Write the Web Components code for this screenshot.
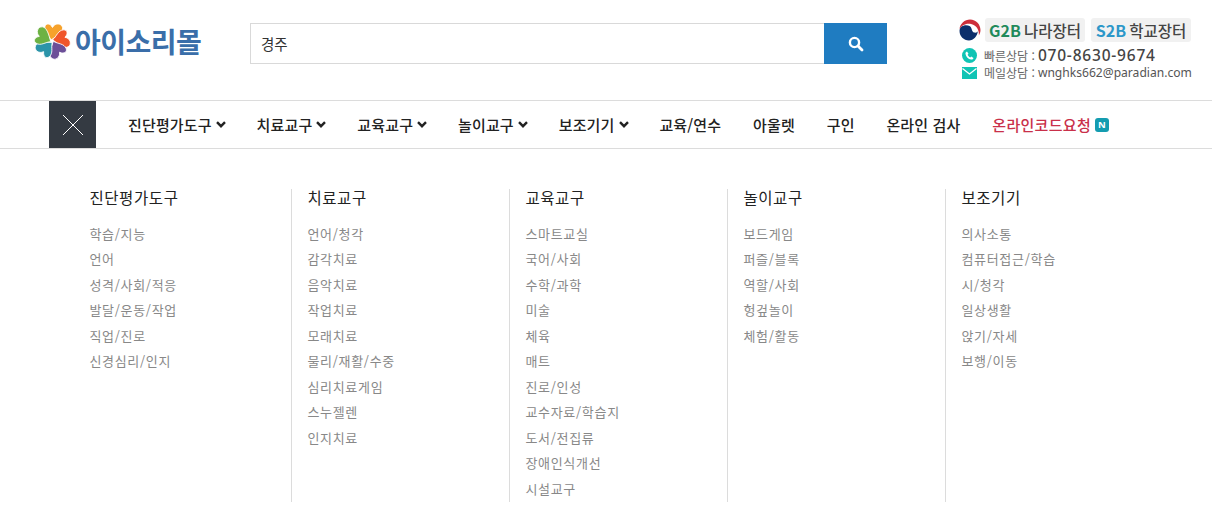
<!DOCTYPE html>
<html lang="ko">
<head>
<meta charset="utf-8">
<title>아이소리몰</title>
<style>
html, body { margin: 0; padding: 0; background: #fff; }
body { font-family: "Noto Sans CJK KR", "Noto Sans", sans-serif; }
</style>
</head>
<body>
<shop-header></shop-header>
<shop-nav>
    <nav-link arrow>진단평가도구</nav-link>
    <nav-link arrow>치료교구</nav-link>
    <nav-link arrow>교육교구</nav-link>
    <nav-link arrow>놀이교구</nav-link>
    <nav-link arrow>보조기기</nav-link>
    <nav-link>교육/연수</nav-link>
    <nav-link>아울렛</nav-link>
    <nav-link>구인</nav-link>
    <nav-link>온라인 검사</nav-link>
    <nav-link hot>온라인코드요청</nav-link>
</shop-nav>
<menu-panel>
    <menu-column heading="진단평가도구" items="학습/지능,언어,성격/사회/적응,발달/운동/작업,직업/진로,신경심리/인지"></menu-column>
    <menu-column heading="치료교구" items="언어/청각,감각치료,음악치료,작업치료,모래치료,물리/재활/수중,심리치료게임,스누젤렌,인지치료"></menu-column>
    <menu-column heading="교육교구" items="스마트교실,국어/사회,수학/과학,미술,체육,매트,진로/인성,교수자료/학습지,도서/전집류,장애인식개선,시설교구"></menu-column>
    <menu-column heading="놀이교구" items="보드게임,퍼즐/블록,역할/사회,헝겊놀이,체험/활동"></menu-column>
    <menu-column heading="보조기기" items="의사소통,컴퓨터접근/학습,시/청각,일상생활,앉기/자세,보행/이동"></menu-column>
</menu-panel>

<script>
(function(){

    // Top row: logo, search box, contact block
    const headerTpl = document.createElement('template');
    headerTpl.innerHTML = `
    <style>
    :host { display: flex; align-items: flex-start; height: 100px; box-sizing: border-box; color: #333; }
    .logo { display: flex; align-items: center; width: 250px; padding: 22px 0 0 33px; box-sizing: border-box; height: 60px; }
    .logo svg { width: 38px; height: 38px; flex: none; }
    .logo span { margin-left: 4px; font-size: 28px; font-weight: 700; color: #3a6ea9; letter-spacing: -0.5px; line-height: 38px; }
    form { display: flex; width: 637px; height: 41px; margin: 23px 0 0; }
    .box { flex: 1; border: 1px solid #d9d9d9; border-right: 0; font-size: 14.500px; line-height: 39px; padding-left: 10px; color: #333; }
    button { width: 63px; border: 0; background: #1f7cc1; padding: 0; display: flex; align-items: center; justify-content: center; }
    .contact { margin: 18px 0 0 72px; width: 240px; }
    .row { display: flex; align-items: center; height: 24px; }
    .badge { display: inline-flex; align-items: center; height: 24px; width: 100px; justify-content: center; margin-left: 6px; background: #f1f1f1; border-radius: 3px; font-size: 15.500px; font-weight: 500; color: #444; white-space: nowrap; }
    .badge:first-of-type { margin-left: 4px; }
    .badge b { font-weight: 700; margin-right: 3px; font-size: 16px; }
    .g2b { color: #1f8a5b; }
    .s2b { color: #2c97c9; }
    .line { display: flex; align-items: center; height: 17px; line-height: 17px; font-size: 12px; color: #666; padding-left: 3px; white-space: nowrap; }
    .line svg { flex: none; margin-right: 7px; }
    .tel { font-size: 15.500px; font-weight: 500; letter-spacing: 0.8px; color: #444; margin-left: 3px; font-family: "Noto Sans", sans-serif; }
    .mail { margin-left: 3px; font-size: 12.100px; font-family: "Noto Sans", sans-serif; color: #555; }
    </style>
    <div class="logo">
        <svg viewBox="-19 -19 38 38" aria-hidden="true">
            <defs><path id="p" d="M-1 -1C-3 -6 -8.500 -9 -7 -14.500C-6 -18 -2 -18 0.500 -13.500C3 -18.500 9.500 -18 10.500 -13.500C11.500 -9 5 -5 -1 -1Z" stroke="#fff" stroke-width="0.800"/></defs>
            <use href="#p" fill="#f6a22c"/>
            <use href="#p" fill="#f0562b" transform="rotate(72)"/>
            <use href="#p" fill="#6c4f98" transform="rotate(144)"/>
            <use href="#p" fill="#2b94a9" transform="rotate(216)"/>
            <use href="#p" fill="#6db244" transform="rotate(288)"/>
        </svg>
        <span>아이소리몰</span>
    </div>
    <form onsubmit="return false">
        <div class="box">경주</div>
        <button type="button" aria-label="검색">
            <svg width="16" height="16" viewBox="0 0 16 16"><circle cx="6.500" cy="6.500" r="4.600" fill="none" stroke="#fff" stroke-width="2.400"/><path d="M10 10l4 4" stroke="#fff" stroke-width="2.800" stroke-linecap="round"/></svg>
        </button>
    </form>
    <div class="contact">
        <div class="row">
            <svg width="22" height="22" viewBox="-10.500 -10.500 21 21" aria-hidden="true">
                <path d="M-10 -1C-9.500 -6 -5 -10 0 -10C6 -10 10 -5 10 0C10 2 9.500 3.500 8.500 5C9 -1 5 -5.500 0 -6C-5 -6.500 -8 -4 -10 -1Z" fill="#cd2e3a"/>
                <path d="M-10 1C-10 -4 -4 -6 0 -3.500C2 -2 1.500 2 4 2.500C6 3 7 2 7.500 1C7 6 3.500 10 -1 10C-6 10 -10 6 -10 1Z" fill="#0d2f6b"/>
            </svg>
            <span class="badge"><b class="g2b">G2B</b>나라장터</span>
            <span class="badge"><b class="s2b">S2B</b>학교장터</span>
        </div>
        <div style="height:5px"></div>
        <div class="line">
            <svg width="15" height="15" viewBox="0 0 15 15" aria-hidden="true"><circle cx="7.500" cy="7.500" r="7.500" fill="#10c4b4"/><path d="M5 3.500l1.500 2.300-.9 1c.5 1.200 1.400 2.100 2.600 2.600l1-.9 2.300 1.500c-.4 1.200-1.300 1.700-2.400 1.500C6.300 11 4 8.700 3.500 5.900 3.300 4.800 3.900 3.900 5 3.500z" fill="#fff"/></svg>
            <span>빠른상담 :</span><span class="tel">070-8630-9674</span>
        </div>
        <div class="line">
            <svg width="15" height="12" viewBox="0 0 15 12" aria-hidden="true"><rect width="15" height="12" fill="#10c4b4"/><path d="M0.500 1.500L7.500 7L14.500 1.500" fill="none" stroke="#fff" stroke-width="1.300"/></svg>
            <span>메일상담 :</span><span class="mail">wnghks662@paradian.com</span>
        </div>
    </div>`;

    customElements.define('shop-header',
    class extends HTMLElement {
        constructor() {
            super();
            this.attachShadow({ mode: 'open' }).append(headerTpl.content.cloneNode(true));
        }
    });

    // Category bar with the dark close button
    const navTpl = document.createElement('template');
    navTpl.innerHTML = `
    <style>
    :host { display: flex; height: 49px; box-sizing: border-box; border-top: 1px solid #dcdcdc; border-bottom: 1px solid #dcdcdc; padding-left: 49px; }
    .close { width: 47px; background: #343a42; display: flex; align-items: center; justify-content: center; flex: none; }
    .items { display: flex; align-items: center; margin-left: 32px; }
    </style>
    <div class="close">
        <svg width="22" height="22" viewBox="0 0 22 22"><path d="M1 1L21 21M21 1L1 21" stroke="#fff" stroke-width="1"/></svg>
    </div>
    <div class="items"><slot></slot></div>`;

    customElements.define('shop-nav',
    class extends HTMLElement {
        constructor() {
            super();
            this.attachShadow({ mode: 'open' }).append(navTpl.content.cloneNode(true));
        }
    });

    const linkTpl = document.createElement('template');
    linkTpl.innerHTML = `
    <style>
    :host { display: inline-flex; align-items: center; font-size: 15px; font-weight: 500; letter-spacing: 0.150px; color: #222; white-space: nowrap; margin-right: 31.800px; line-height: 47px; }
    :host([hot]) { color: #c9304a; margin-right: 0; letter-spacing: 0.300px; }
    svg { margin-left: 4px; display: none; }
    :host([arrow]) { margin-right: 30.900px; }
    :host([arrow]) svg.arrow { display: block; }
    :host([hot]) .new { display: inline-flex; }
    .new { display: none; width: 14px; height: 14px; margin: 1px 0 0 4px; border-radius: 3px; background: #149cb0; color: #fff; font-size: 9.500px; font-weight: 700; line-height: 14px; align-items: center; justify-content: center; font-family: "Noto Sans", sans-serif; }
    </style>
    <slot></slot>
    <svg class="arrow" width="10" height="7" viewBox="0 0 10 7"><path d="M1 1.200L5 5.200L9 1.200" fill="none" stroke="#222" stroke-width="2.400"/></svg>
    <span class="new">N</span>`;

    customElements.define('nav-link',
    class extends HTMLElement {
        constructor() {
            super();
            this.attachShadow({ mode: 'open' }).append(linkTpl.content.cloneNode(true));
        }
    });

    // Five-column dropdown below the bar
    const panelTpl = document.createElement('template');
    panelTpl.innerHTML = `
    <style>
    :host { display: grid; grid-template-columns: repeat(5, 218px); padding: 40px 0 0 73px; }
    </style>
    <slot></slot>`;

    customElements.define('menu-panel',
    class extends HTMLElement {
        constructor() {
            super();
            this.attachShadow({ mode: 'open' }).append(panelTpl.content.cloneNode(true));
        }
    });

    const colTpl = document.createElement('template');
    colTpl.innerHTML = `
    <style>
    :host { display: block; height: 313px; box-sizing: border-box; padding-left: 15.400px; border-left: 1px solid #dcdcdc; }
    :host(:first-child) { border-left-color: transparent; }
    h3 { margin: 0 0 14.500px; font-size: 15.500px; font-weight: 400; letter-spacing: 0.600px; line-height: 17px; color: #222; }
    ul { list-style: none; margin: 0; padding: 0; }
    li { font-size: 13px; letter-spacing: 0.700px; line-height: 25.500px; color: #888; white-space: nowrap; }
    </style>
    <h3></h3>
    <ul></ul>`;

    customElements.define('menu-column',
    class extends HTMLElement {
        constructor() {
            super();
            this.attachShadow({ mode: 'open' }).append(colTpl.content.cloneNode(true));
        }
        connectedCallback() {
            const root = this.shadowRoot;
            root.querySelector('h3').textContent = this.getAttribute('heading');
            const list = root.querySelector('ul');
            this.getAttribute('items').split(',').forEach((text) => {
                const li = document.createElement('li');
                li.textContent = text;
                list.append(li);
            });
        }
    });

}) ();
</script>
</body>
</html>
